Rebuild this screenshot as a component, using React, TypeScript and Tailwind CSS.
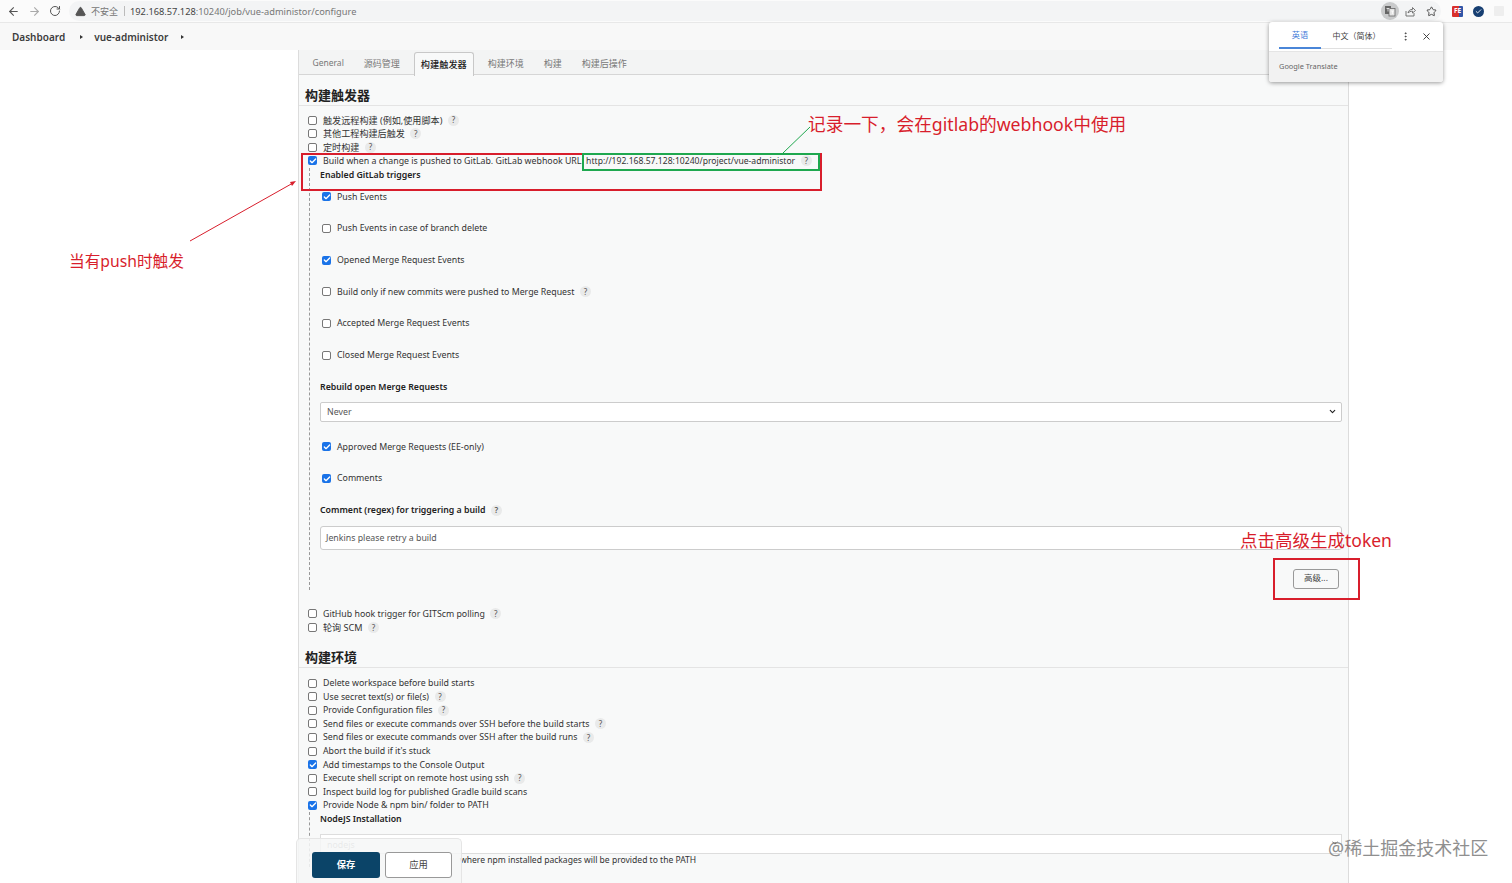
import React from "react";
import { ArrowLeft, ArrowRight, RotateCw, TriangleAlert, Star, Check, ChevronDown, EllipsisVertical, X } from "lucide-react";

function Help() {
  return <span className="ml-[5.5px] inline-flex h-[11px] w-[11px] shrink-0 items-center justify-center rounded-full bg-[#e9eaea] text-[8px] leading-none text-[#555]">?</span>;
}

function Box({ on }: { on?: boolean }) {
  return on ? (
    <span className="flex h-[9px] w-[9px] shrink-0 items-center justify-center rounded-[2px] bg-[#1a73e8]">
      <Check size={8} strokeWidth={4} className="text-white" />
    </span>
  ) : (
    <span className="h-[9px] w-[9px] shrink-0 rounded-[2px] border border-[#777] bg-white" />
  );
}

function Label({ text }: { text: string }) {
  const cjk = /[^\x00-\x7f]/.test(text);
  return <span className={cjk ? "ml-[6px] pt-[1px] text-[9.1px] whitespace-nowrap" : "ml-[6px] pt-[1px] whitespace-nowrap"}>{text}</span>;
}

function Row({ label, on, help }: { label: string; on?: boolean; help?: boolean }) {
  return (
    <div className="flex h-[13.6px] items-center">
      <Box on={on} />
      <Label text={label} />
      {help && <Help />}
    </div>
  );
}

function SubRow({ label, on, help }: { label: string; on?: boolean; help?: boolean }) {
  return (
    <div className="h-[31.7px] pl-[2px]">
      <div className="flex h-[14px] items-center">
        <Box on={on} />
        <Label text={label} />
        {help && <Help />}
      </div>
    </div>
  );
}

function Bold({ children, help }: { children: React.ReactNode; help?: boolean }) {
  return (
    <div className="flex h-[14px] items-center font-semibold whitespace-nowrap text-[#222]">
      <span className="pt-[1px] text-[8.75px]">{children}</span>
      {help && <Help />}
    </div>
  );
}

function Tab({ label, active }: { label: string; active?: boolean }) {
  return active ? (
    <div className="mt-[2px] flex h-[24px] items-center rounded-t-[3px] border border-b-0 border-[#c8c8c8] bg-[#f8f9f9] px-[6px] text-[9.2px] font-medium text-[#222]">{label}</div>
  ) : (
    <div className="flex h-[25px] items-center px-[10px] pt-[2px] text-[#777]">{label}</div>
  );
}

function Heading({ children, h }: { children: React.ReactNode; h: string }) {
  return (
    <div className={`-ml-[9px] flex items-end border-b border-[#e4e4e4] pb-[1px] pl-[6px] text-[13px] leading-[17px] font-semibold text-[#222] ${h}`}>{children}</div>
  );
}

export default function App() {
  return (
    <div className="relative h-[883px] w-[1512px] overflow-hidden bg-white font-['Noto_Sans','Noto_Sans_CJK_SC',sans-serif] text-[8.8px] text-[#333]">
      {/* browser toolbar */}
      <div className="flex h-[23px] items-center border-b border-[#e8e8e8] bg-[#fbfbfb] pl-[7px]">
        <ArrowLeft size={13} className="text-[#555]" />
        <ArrowRight size={13} className="ml-[8px] text-[#aaa]" />
        <RotateCw size={12} className="ml-[8px] text-[#555]" />
        <div className="ml-[8px] flex h-[20px] w-[1372px] items-center rounded-full bg-[#f3f4f5] pl-[6px]">
          <TriangleAlert size={11} fill="#555" className="text-[#555]" />
          <span className="ml-[5px] pt-[1px] text-[9px] text-[#777]">不安全</span>
          <span className="mx-[5.5px] h-[10px] w-px bg-[#bbb]" />
          <span className="pt-[1px] text-[9.27px] text-[#444]">192.168.57.128<span className="text-[#777]">:10240/job/vue-administor/configure</span></span>
          <div className="ml-auto flex items-center">
            <span className="flex h-[18px] w-[18px] items-center justify-center rounded-full bg-[#c9cacb]">
              <svg width="12" height="12" viewBox="0 0 12 12" fill="none">
                <rect x="1" y="1" width="6" height="8" fill="#666" />
                <rect x="5" y="3.5" width="6" height="7.5" fill="#e4e4e4" stroke="#666" strokeWidth="0.8" />
                <path d="M2.5 3.5h3M4 3v3.5M7 6h3M8.5 6v3" stroke="#fff" strokeWidth="0.7" />
              </svg>
            </span>
            <svg className="ml-[6px]" width="11" height="11" viewBox="0 0 11 11" fill="none" stroke="#666" strokeWidth="0.9">
              <path d="M1 5v5h8V7" />
              <path d="M3 7c.4-2.6 2.4-3.6 4.5-3.6V1.5L10.5 4.5 7.5 7V5.2C5.6 5.2 4.2 5.8 3 7Z" />
            </svg>
            <Star size={11} className="mr-[4px] ml-[10px] text-[#444]" />
          </div>
        </div>
        <div className="ml-[11px] flex h-[11px] w-[11px] items-center justify-center rounded-[1px] bg-[linear-gradient(90deg,#d9302c_60%,#3256a8_60%)] text-[6.5px] leading-none font-bold text-white">FE</div>
        <div className="ml-[10px] flex h-[11px] w-[11px] items-center justify-center rounded-full bg-[#173f72]"><Check size={7} strokeWidth={3} className="text-white" /></div>
        <div className="ml-[10px] h-[10px] w-[10px] rounded-[1px] bg-[#eeeeee]" />
      </div>

      {/* breadcrumb */}
      <div className="flex h-[27px] items-center bg-[#f8f8f8] pl-[12px] text-[10px] font-semibold text-[#3c3c3c]">
        <span className="pt-[1px]">Dashboard</span>
        <span className="mr-[11px] ml-[15px] h-0 w-0 border-y-[2.5px] border-l-[3px] border-y-transparent border-l-[#333]" />
        <span className="pt-[1px]">vue-administor</span>
        <span className="ml-[13px] h-0 w-0 border-y-[2.5px] border-l-[3px] border-y-transparent border-l-[#333]" />
      </div>

      {/* configuration panel */}
      <div className="ml-[298px] h-[833px] w-[1051px] border-x border-[#dcdcdc] bg-[#f8f9f9]">
        <div className="flex h-[25px] border-b border-[#d6d6d6] bg-[#f3f4f4] pl-[3.5px] text-[9px]">
          <div className="flex h-[25px] items-center px-[10px] pt-[2px] text-[8.5px] text-[#777]">General</div>
          <Tab label="源码管理" />
          <div className="w-[4px]" />
          <Tab label="构建触发器" active />
          <div className="w-[4px]" />
          <Tab label="构建环境" />
          <Tab label="构建" />
          <Tab label="构建后操作" />
        </div>

        <div className="pl-[9px]">
          <Heading h="h-[31px]">构建触发器</Heading>
          <div className="h-[7.4px]" />
          <Row label="触发远程构建 (例如,使用脚本)" help />
          <Row label="其他工程构建后触发" help />
          <Row label="定时构建" help />
          <div className="flex h-[13.6px] items-center">
            <Box on />
            <span className="ml-[6px] pt-[1px] whitespace-nowrap">Build when a change is pushed to GitLab. GitLab webhook URL: <span className="text-[8.6px]">http://192.168.57.128:10240/project/vue-administor</span></span>
            <Help />
          </div>

          <div className="ml-[1px] h-[422px] border-l border-dashed border-[#999] pr-[6px] pl-[10px]">
            <Bold>Enabled GitLab triggers</Bold>
            <div className="h-[8px]" />
            <SubRow label="Push Events" on />
            <SubRow label="Push Events in case of branch delete" />
            <SubRow label="Opened Merge Request Events" on />
            <SubRow label="Build only if new commits were pushed to Merge Request" help />
            <SubRow label="Accepted Merge Request Events" />
            <SubRow label="Closed Merge Request Events" />
            <Bold>Rebuild open Merge Requests</Bold>
            <div className="mt-[8px] flex h-[20px] items-center justify-between rounded-[2px] border border-[#ccc] bg-white pr-[4px] pl-[6px] text-[#555]">
              <span className="pt-[1px]">Never</span>
              <ChevronDown size={9} strokeWidth={3} className="text-[#222]" />
            </div>
            <div className="h-[18px]" />
            <SubRow label="Approved Merge Requests (EE-only)" on />
            <SubRow label="Comments" on />
            <Bold help>Comment (regex) for triggering a build</Bold>
            <div className="mt-[8.4px] flex h-[24px] items-center rounded-[3px] border border-[#ccc] bg-white pt-[1px] pl-[5px] text-[#555]">Jenkins please retry a build</div>
            <div className="mt-[19px] flex justify-end pr-[3px]">
              <div className="flex h-[20px] w-[46px] items-center justify-center rounded-[3px] border border-[#999] bg-[#f8f9f9] text-[8.5px] text-[#444]">高级...</div>
            </div>
          </div>

          <div className="h-[17.4px]" />
          <Row label="GitHub hook trigger for GITScm polling" help />
          <Row label="轮询 SCM" help />
          <Heading h="h-[34px]">构建环境</Heading>
          <div className="h-[8px]" />
          <Row label="Delete workspace before build starts" />
          <Row label="Use secret text(s) or file(s)" help />
          <Row label="Provide Configuration files" help />
          <Row label="Send files or execute commands over SSH before the build starts" help />
          <Row label="Send files or execute commands over SSH after the build runs" help />
          <Row label="Abort the build if it's stuck" />
          <Row label="Add timestamps to the Console Output" on />
          <Row label="Execute shell script on remote host using ssh" help />
          <Row label="Inspect build log for published Gradle build scans" />
          <Row label="Provide Node & npm bin/ folder to PATH" on />
          <div className="ml-[1px] border-l border-dashed border-[#999] pr-[6px] pl-[10px]">
            <Bold>NodeJS Installation</Bold>
            <div className="mt-[7.5px] flex h-[20px] items-center border border-[#ddd] bg-white pt-[3px] pl-[6px] text-[#999]">nodejs</div>
            <div className="pl-[140px] text-[8.55px] whitespace-nowrap">where npm installed packages will be provided to the PATH</div>
          </div>
        </div>
      </div>

      {/* sticky save bar */}
      <div className="absolute top-[838px] left-[296px] flex h-[45px] w-[166px] items-start gap-[5px] rounded-t-[5px] border border-b-0 border-[#e5e5e5] bg-[#f6f7f7]/85 pt-[13px] pl-[15px]">
        <div className="flex h-[26px] w-[68px] items-center justify-center rounded-[3px] bg-[#0b4468] text-[9.3px] font-bold text-white">保存</div>
        <div className="flex h-[26px] w-[67px] items-center justify-center rounded-[3px] border border-[#999] bg-white text-[9.3px] text-[#444]">应用</div>
      </div>

      {/* translate popup */}
      <div className="absolute top-[22px] left-[1269px] h-[60px] w-[174px] overflow-hidden rounded-[3px] bg-white shadow-[0_1px_4px_rgba(0,0,0,0.4)]">
        <div className="flex h-[30px] items-center border-b border-[#e5e5e5] pl-[10px]">
          <div className="flex h-[24px] w-[42px] items-center justify-center border-b-2 border-[#4a86d8] text-[8.2px] text-[#3b78d8]">英语</div>
          <div className="flex h-[24px] w-[71px] items-center justify-center border-b border-[#e0e0e0] text-[8px] text-[#444]">中文（简体）</div>
          <EllipsisVertical size={11} className="ml-[8px] text-[#444]" />
          <X size={11} className="ml-[10px] text-[#333]" />
        </div>
        <div className="flex h-[30px] items-center bg-[#f2f2f2] pl-[10px] text-[7.4px] text-[#666]">Google Translate</div>
      </div>

      {/* annotations */}
      <div className="absolute top-[153px] left-[301px] h-[38px] w-[521px] border-2 border-[#d81e2c]" />
      <div className="absolute top-[153px] left-[582px] h-[18px] w-[238px] border-2 border-[#1fa84f]" />
      <div className="absolute top-[558px] left-[1273px] h-[42px] w-[87px] border-2 border-[#d81e2c]" />
      <svg className="absolute top-0 left-0 h-[883px] w-[1512px]" viewBox="0 0 1512 883" fill="none">
        <path d="M783 153 L810 127" stroke="#1fa84f" strokeWidth="1" />
        <path d="M190 241 L293 183" stroke="#d81e2c" strokeWidth="1" />
        <path d="M296 181 L290 182 L292 186 Z" fill="#d81e2c" />
        <path d="M1332.5 842 L1335 844 L1337.5 842" stroke="#444" strokeWidth="1" />
      </svg>
      <div className="absolute top-[111px] left-[808px] text-[17.7px] leading-[26px] whitespace-nowrap text-[#d81e2c]">记录一下，会在gitlab的webhook中使用</div>
      <div className="absolute top-[249px] left-[69px] text-[15.7px] leading-[24px] whitespace-nowrap text-[#d81e2c]">当有push时触发</div>
      <div className="absolute top-[527px] left-[1240px] text-[17.5px] leading-[26px] whitespace-nowrap text-[#d81e2c]">点击高级生成token</div>
      <div className="absolute top-[836px] left-[1328px] text-[18px] leading-[24px] whitespace-nowrap text-[#8f8f8f]">@稀土掘金技术社区</div>
    </div>
  );
}
